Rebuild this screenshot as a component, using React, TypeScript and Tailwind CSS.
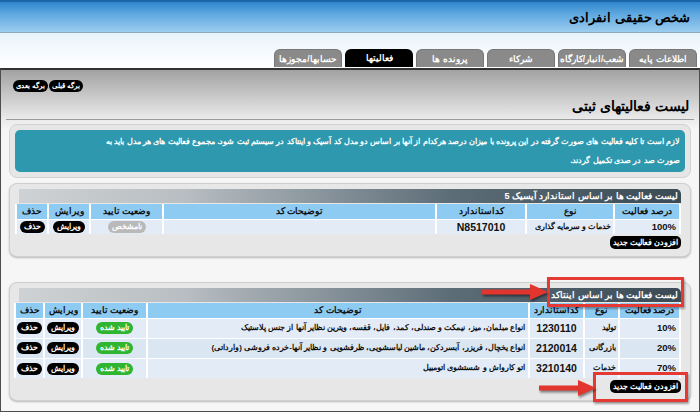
import React from "react";

const tabs = [
  "اطلاعات پایه",
  "شعب/انبار/کارگاه",
  "شرکاء",
  "پرونده ها",
  "فعالیتها",
  "حسابها/مجوزها",
];

type Row = {
  percent: string;
  kind: string;
  code: string;
  desc: string;
  status: "ok" | "unknown";
};

const isicRows: Row[] = [
  { percent: "100%", kind: "خدمات و سرمایه گذاری", code: "N8517010", desc: "", status: "unknown" },
];

const intaRows: Row[] = [
  {
    percent: "10%",
    kind: "تولید",
    code: "1230110",
    desc: "انواع مبلمان، میز، نیمکت و صندلی، کمد، فایل، قفسه، ویترین نظایر آنها از جنس پلاستیک",
    status: "ok",
  },
  {
    percent: "20%",
    kind: "بازرگانی",
    code: "2120014",
    desc: "انواع یخچال، فریزر، آبسردکن، ماشین لباسشویی، ظرفشویی و نظایر آنها-خرده فروشی (وارداتی)",
    status: "ok",
  },
  {
    percent: "70%",
    kind: "خدمات",
    code: "3210140",
    desc: "اتو کارواش و شستشوی اتومبیل",
    status: "ok",
  },
];

function Pill({
  children,
  tone,
  small,
}: {
  children: React.ReactNode;
  tone: "black" | "green" | "grey";
  small?: boolean;
}) {
  const bg =
    tone === "black" ? "bg-black" : tone === "green" ? "bg-[#2fb52f]" : "bg-[#b9b9b9]";
  return (
    <span
      className={`inline-block align-middle ${bg} text-white font-bold rounded-full whitespace-nowrap ${
        small ? "text-[7px] leading-[12px] px-[3px]" : "text-[7.5px] leading-[12px] px-[4px]"
      }`}
    >
      {children}
    </span>
  );
}

function Arrow({ w }: { w: number }) {
  const h = w - 18;
  return (
    <svg width={w} height="18" viewBox={`0 0 ${w} 18`} className="drop-shadow-[1px_2px_1px_rgba(0,0,0,0.45)]">
      <polygon points={`0,6.5 ${h},6.5 ${h},1 ${w},9 ${h},17 ${h},11.5 0,11.5`} fill="#e2352e" />
    </svg>
  );
}

function Section({
  title,
  rows,
  cols,
  tall,
}: {
  title: string;
  rows: Row[];
  cols: number[];
  tall?: boolean;
}) {
  const rowH = tall ? "h-[20px]" : "h-[15px]";
  return (
    <div className="mx-[8px] rounded-[8px] border border-[#cfcfcf] bg-[#e7e7e7] shadow-[0_1px_2px_rgba(0,0,0,0.25)] px-[9px] pt-[5px] pb-[7px]">
      <div className="h-[14px] rounded-tr-[5px] bg-[linear-gradient(to_left,#3b4b56,#5d6d78_35%,#b8bec2_75%,#cfd2d4)] text-white text-[9px] font-bold leading-[14px] pr-[3px]">
        {title}
      </div>
      <table className="w-full table-fixed border-collapse mt-[1px] text-[8.5px] font-bold text-[#111] leading-[12px]">
        <colgroup>
          {cols.map((w, i) => (
            <col key={i} style={{ width: w }} />
          ))}
        </colgroup>
        <thead>
          <tr className="h-[15px] bg-[#8ecbf3]">
            {["درصد فعالیت", "نوع", "کداستاندارد", "توضیحات کد", "وضعیت تایید", "ویرایش", "حذف"].map((h) => (
              <th
                key={h}
                className="border-x-2 border-white font-bold text-[9px] text-center p-0 align-middle whitespace-nowrap overflow-hidden"
              >
                {h}
              </th>
            ))}
          </tr>
        </thead>
        <tbody>
          {rows.map((r, i) => (
            <tr
              key={r.code}
              className={`${rowH} ${i % 2 === 0 ? "bg-[#e3ecf6]" : "bg-[#dbe6f3]"} border-t border-white`}
            >
              <td className="border-x-2 border-white text-right pr-[3px] p-0 align-middle text-[9.5px]">{r.percent}</td>
              <td className="border-x-2 border-white text-right pr-[2px] p-0 align-middle text-[7.8px] whitespace-nowrap overflow-hidden">
                {r.kind}
              </td>
              <td className="border-x-2 border-white text-center p-0 align-middle text-[10.5px]">{r.code}</td>
              <td className="border-x-2 border-white text-right pr-[3px] p-0 align-middle text-[8px] whitespace-nowrap overflow-hidden">
                {r.desc}
              </td>
              <td className="border-x-2 border-white text-center p-0 align-middle">
                {r.status === "ok" ? <Pill tone="green">تایید شده</Pill> : <Pill tone="grey">نامشخص</Pill>}
              </td>
              <td className="border-x-2 border-white text-center p-0 align-middle">
                <Pill tone="black">ویرایش</Pill>
              </td>
              <td className="border-x-2 border-white text-center p-0 align-middle">
                <Pill tone="black">حذف</Pill>
              </td>
            </tr>
          ))}
        </tbody>
      </table>
      <div className="flex mt-[2px] h-[13px]">
        <span className="bg-black text-white text-[8px] font-bold leading-[13px] rounded-[5px] px-[3px] whitespace-nowrap">
          افزودن فعالیت جدید
        </span>
      </div>
    </div>
  );
}

export default function App() {
  return (
    <div
      dir="rtl"
      className="relative w-[700px] h-[414px] overflow-hidden bg-white font-['Liberation_Sans',sans-serif]"
    >
      {/* Header */}
      <div className="h-[68px] bg-[linear-gradient(to_bottom,#cfe5f6_0%,#eef6fc_60%,#ffffff_100%)]">
        <div className="h-[33px] border-t-2 border-[#1b66a8] border-b border-b-[#8fa9bb] bg-[linear-gradient(to_bottom,#2f86cc,#5ea8e0_40%,#9ccdf0)] pr-[10px] pt-[7px]">
          <h1 className="text-[12.5px] font-bold text-black leading-[18px]">شخص حقیقی انفرادی</h1>
        </div>
        <div className="flex items-end gap-[3px] pr-[3px] pt-[16px]">
          {tabs.map((t) => (
            <div
              key={t}
              className={`w-[68px] h-[18px] rounded-t-[6px] text-center text-white text-[8.5px] font-bold leading-[18px] whitespace-nowrap ${
                t === "فعالیتها" ? "bg-black" : "bg-[#8a8a8a] border-t border-x border-[#777]"
              }`}
            >
              {t}
            </div>
          ))}
        </div>
      </div>

      {/* Main panel */}
      <div className="h-[344px] border border-[#4d4d4d] border-t-2 border-t-[#333] bg-[linear-gradient(to_bottom,#a2a2a2_0px,#e9e9e9_48px,#f6f6f6_60px,#f6f6f6_100%)]">
        <div className="flex justify-end pl-[12px] pt-[10px] gap-[1px] h-[22px]">
          <Pill tone="black" small>
            برگه قبلی
          </Pill>
          <Pill tone="black" small>
            برگه بعدی
          </Pill>
        </div>
        <h2 className="pr-[10px] mt-[4px] text-[14px] font-bold text-black leading-[20px]">لیست فعالیتهای ثبتی</h2>
        <div className="mx-[5px] mt-[3px] border-t border-[#9a9a9a]" />

        <div className="mx-[8px] mt-[4px] rounded-[8px] border border-[#d2d2d2] bg-[#e6e6e6] p-[5px]">
          <div className="rounded-[5px] bg-[#2d98ae] text-white text-[8.3px] font-bold leading-[19px] px-[5px] py-[2px] whitespace-nowrap">
            لازم است تا کلیه فعالیت های صورت گرفته در این پرونده با میزان درصد هرکدام از آنها بر اساس دو مدل کد آسیک و اینتاکد در سیستم ثبت شود. مجموع فعالیت های هر مدل باید به
            <br />
            صورت صد در صدی تکمیل گردند.
          </div>
        </div>

        <div className="mt-[5px]">
          <Section
            title="لیست فعالیت ها بر اساس استاندارد آیسیک 5"
            rows={isicRows}
            cols={[66, 88, 90, 273, 73, 42, 32]}
          />
        </div>

        <div className="mt-[25px]">
          <Section
            title="لیست فعالیت ها بر اساس اینتاکد"
            rows={intaRows}
            cols={[61, 35, 55, 382, 65, 38, 29]}
            tall
          />
        </div>
      </div>

      {/* Annotations */}
      <div className="absolute left-[547px] top-[277px] w-[137px] h-[30px] border-[3px] border-[#e53a33] shadow-[1px_2px_2px_rgba(0,0,0,0.35)]" />
      <div className="absolute left-[482px] top-[283px]">
        <Arrow w={66} />
      </div>
      <div className="absolute left-[593px] top-[372px] w-[95px] h-[30px] border-[3px] border-[#e53a33] shadow-[1px_2px_2px_rgba(0,0,0,0.35)]" />
      <div className="absolute left-[539px] top-[379px]">
        <Arrow w={57} />
      </div>
    </div>
  );
}
